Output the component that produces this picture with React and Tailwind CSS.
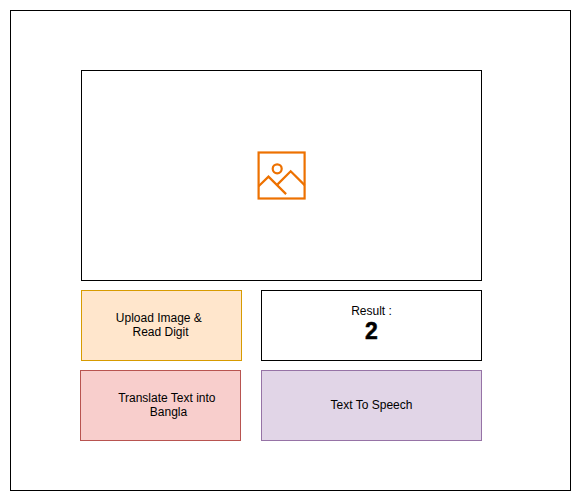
function ImageIcon() {
  return (
    <svg
      width="50"
      height="50"
      viewBox="0 0 50 50"
      fill="none"
      stroke="#ED7100"
      strokeWidth="2.2"
      className="block"
    >
      <rect x="1.6" y="1.5" width="46" height="46" />
      <circle cx="20.2" cy="17.8" r="4.5" />
      <path d="M1.6 35.3 11.5 25.6 29.1 43.1" />
      <path d="M20.3 33.6 33.7 20.2 47.6 34.1" />
    </svg>
  );
}

export default function App() {
  return (
    <div className="h-[501px] w-[581px] bg-white p-2.5 font-['Liberation_Sans',Arial,sans-serif] text-xs leading-[14px] text-black">
      <main className="flex h-[481px] w-[561px] flex-col gap-[9px] border border-black pt-[59px] pl-[70px]">
        <section className="flex h-[211px] w-[401px] items-center justify-center border border-black">
          <ImageIcon />
        </section>
        <div className="flex gap-[19px]">
          <button className="flex h-[71px] w-[161px] items-center justify-center border border-[#D79B00] bg-[#FFE6CC] pr-[2px] pb-[2px] text-center">
            <span>
              Upload Image &amp;&nbsp;
              <br />
              Read Digit
            </span>
          </button>
          <section className="flex h-[71px] w-[221px] flex-col items-center border border-black pt-[13px]">
            <span>Result :</span>
            <span className="text-[23px] leading-[27px] font-bold [-webkit-text-stroke:0.5px_black]">2</span>
          </section>
        </div>
        <div className="-ml-px flex gap-5">
          <button className="flex h-[71px] w-[161px] items-center justify-center border border-[#B85450] bg-[#F8CECC] pb-[2px] pl-[16px] text-center">
            <span>
              Translate Text into&nbsp;
              <br />
              Bangla
            </span>
          </button>
          <button className="flex h-[71px] w-[221px] items-center justify-center border border-[#9673A6] bg-[#E1D5E7] pb-[2px]">
            Text To Speech
          </button>
        </div>
      </main>
    </div>
  );
}
